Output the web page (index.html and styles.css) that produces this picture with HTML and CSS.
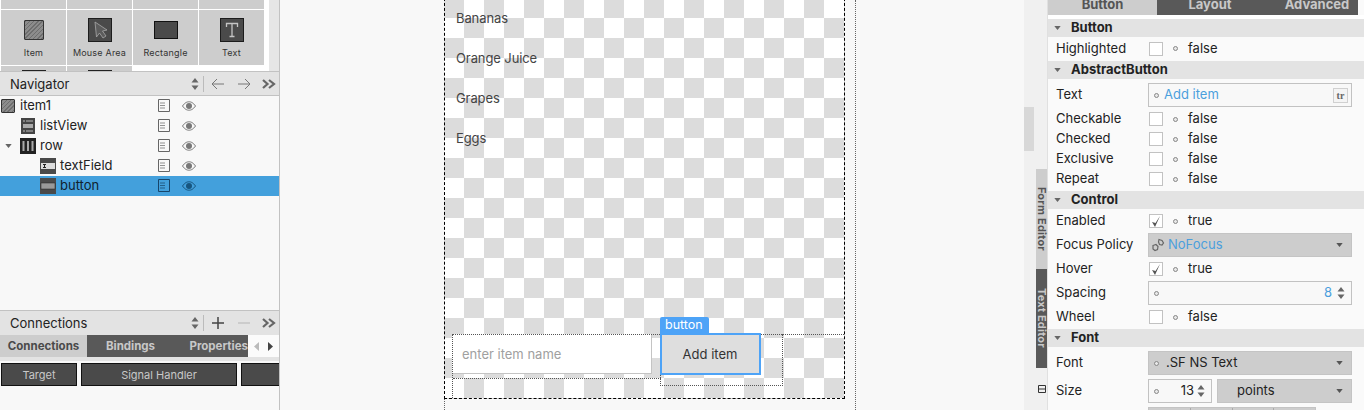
FILE: index.html
```html
<!DOCTYPE html>
<html lang="en">
<head>
    <meta charset="UTF-8">
    <title>Qt Quick Designer</title>
    <link rel="stylesheet" href="styles.css">
</head>
<body>
    <svg class="defs">
        <symbol id="doc" viewBox="0 0 12 13"><path d="M.5.5h11v12H.5z" fill="none" stroke="currentColor"/><path d="M2 4h5M2 6.500h5M2 9h5" stroke="currentColor" opacity=".7"/></symbol>
        <symbol id="eye" viewBox="0 0 14 10"><path d="M.5 5C3 1.500 5 .8 7 .8s4 .7 6.500 4.200C11 8.500 9 9.200 7 9.200S3 8.500.5 5z" fill="none" stroke="currentColor"/><circle cx="7" cy="5" r="3" fill="currentColor"/></symbol>
        <symbol id="updown" viewBox="0 0 8 12"><path d="M4 0l3.500 4.500h-7zM4 12L.5 7.500h7z" fill="currentColor"/></symbol>
        <symbol id="caret" viewBox="0 0 8 5"><path d="M0 0h8L4 5z" fill="currentColor"/></symbol>
        <symbol id="more" viewBox="0 0 14 10"><path d="M1 1l4.500 4L1 9M7 1l5 4-5 4" fill="none" stroke="currentColor" stroke-width="2.200"/></symbol>
        <symbol id="check" viewBox="0 0 12 13"><path d="M2 7l3 5 5-11-4.500 7z" fill="currentColor"/></symbol>
    </svg>

    <div class="app">
        <!-- left side: library, navigator, connections -->
        <aside class="left">
            <div class="library">
                <div class="lib-grid">
                    <div class="cell cell-cut"></div>
                    <div class="cell cell-cut"></div>
                    <div class="cell cell-cut"></div>
                    <div class="cell cell-cut"></div>

                    <div class="cell">
                        <div class="lib-icon"><span class="ico-item"></span></div>
                        <span>Item</span>
                    </div>
                    <div class="cell">
                        <div class="lib-icon">
                            <svg width="24" height="24" viewBox="0 0 24 24"><rect x=".5" y=".5" width="23" height="23" fill="#4a4a4a" stroke="#1c1c1c"/><path d="M7 4l1.500 15 3-4 3.500 5 3-2-3.500-5 4.500-1z" fill="#5c5c5c" stroke="#a8a8a8" stroke-width=".8"/></svg>
                        </div>
                        <span>Mouse Area</span>
                    </div>
                    <div class="cell">
                        <div class="lib-icon">
                            <svg width="24" height="18" viewBox="0 0 24 18"><rect x=".5" y=".5" width="23" height="17" fill="#4a4a4a" stroke="#111"/></svg>
                        </div>
                        <span>Rectangle</span>
                    </div>
                    <div class="cell">
                        <div class="lib-icon">
                            <svg width="24" height="24" viewBox="0 0 24 24"><rect x=".5" y=".5" width="23" height="23" fill="#4a4a4a" stroke="#1c1c1c"/><path d="M6.500 9V5.500h11V9M12 5.500v13M9.500 18.500h5" fill="none" stroke="#c4c4c4" stroke-width="1.300"/></svg>
                        </div>
                        <span>Text</span>
                    </div>

                    <div class="cell cell-peek"><i></i></div>
                    <div class="cell cell-peek"><i></i></div>
                </div>
                <div class="lib-scroll"></div>
            </div>

            <div class="pane-head">
                <span class="pane-title">Navigator</span>
                <svg class="ud" width="8" height="12"><use href="#updown"/></svg>
                <span class="pane-sep"></span>
                <svg class="tool" width="14" height="12" viewBox="0 0 14 12"><path d="M13 6H1M6 1L1 6l5 5" fill="none" stroke="#777"/></svg>
                <svg class="tool" width="14" height="12" viewBox="0 0 14 12"><path d="M1 6h12M8 1l5 5-5 5" fill="none" stroke="#777"/></svg>
                <svg class="more" width="14" height="10"><use href="#more"/></svg>
            </div>

            <div class="tree">
                <div class="node lvl0">
                    <span class="ico-item ico-small"></span>
                    <span class="node-name">item1</span>
                    <svg class="doc" width="12" height="13"><use href="#doc"/></svg>
                    <svg class="eye" width="14" height="10"><use href="#eye"/></svg>
                </div>
                <div class="node lvl1">
                    <svg width="14" height="16" viewBox="0 0 14 16"><rect width="14" height="16" fill="#444"/><path d="M2 3h2M5 3h7M2 13h2M5 13h7" stroke="#bbb"/><rect x="2" y="6" width="10" height="4" fill="#aaa"/></svg>
                    <span class="node-name">listView</span>
                    <svg class="doc" width="12" height="13"><use href="#doc"/></svg>
                    <svg class="eye" width="14" height="10"><use href="#eye"/></svg>
                </div>
                <div class="node lvl1">
                    <svg class="twisty" width="7" height="4"><use href="#caret"/></svg>
                    <svg class="ico-row" width="16" height="16" viewBox="0 0 16 16"><rect width="16" height="16" fill="#222"/><path d="M3.500 3v10M8 3v10M12.500 3v10" stroke="#aaa" stroke-width="2"/></svg>
                    <span class="node-name">row</span>
                    <svg class="doc" width="12" height="13"><use href="#doc"/></svg>
                    <svg class="eye" width="14" height="10"><use href="#eye"/></svg>
                </div>
                <div class="node lvl2">
                    <svg width="16" height="16" viewBox="0 0 16 16"><rect width="16" height="16" fill="#4a4a4a"/><rect x="1" y="5" width="14" height="6" fill="#ddd"/><path d="M3 6.500h3M3 9.500h3M4.500 6.500v3" stroke="#222"/></svg>
                    <span class="node-name">textField</span>
                    <svg class="doc" width="12" height="13"><use href="#doc"/></svg>
                    <svg class="eye" width="14" height="10"><use href="#eye"/></svg>
                </div>
                <div class="node lvl2 selected">
                    <svg width="16" height="16" viewBox="0 0 16 16"><rect width="16" height="16" fill="#4a4a4a"/><rect x="1" y="5" width="14" height="6" fill="#999" stroke="#222" stroke-width=".5"/></svg>
                    <span class="node-name">button</span>
                    <svg class="doc" width="12" height="13"><use href="#doc"/></svg>
                    <svg class="eye" width="14" height="10"><use href="#eye"/></svg>
                </div>
            </div>

            <div class="pane-head pane-head-conn">
                <span class="pane-title">Connections</span>
                <svg class="ud" width="8" height="12"><use href="#updown"/></svg>
                <span class="pane-sep"></span>
                <svg class="tool" width="14" height="14" viewBox="0 0 14 14"><path d="M7 1v12M1 7h12" stroke="#444" stroke-width="1.500"/></svg>
                <svg class="tool" width="14" height="14" viewBox="0 0 14 14"><path d="M1 7h12" stroke="#c4c4c4" stroke-width="1.500"/></svg>
                <svg class="more" width="14" height="10"><use href="#more"/></svg>
            </div>
            <div class="conn-tabs">
                <span class="conn-tab on">Connections</span>
                <div class="conn-rest">
                    <span class="conn-tab">Bindings</span>
                    <span class="conn-tab conn-tab-props">Properties</span>
                </div>
                <div class="conn-arrows">
                    <svg width="5" height="9" viewBox="0 0 5 9"><path d="M5 0v9L0 4.500z" fill="#bbb"/></svg>
                    <svg width="5" height="9" viewBox="0 0 5 9"><path d="M0 0v9l5-4.500z" fill="#444"/></svg>
                </div>
            </div>
            <div class="conn-cols">
                <span class="col-btn col-target">Target</span>
                <span class="col-btn col-signal">Signal Handler</span>
                <span class="col-btn col-rest"></span>
            </div>
            <div class="conn-empty"></div>
        </aside>

        <!-- form canvas -->
        <main class="center">
            <div class="guide guide-right"></div>
            <div class="guide guide-below"></div>
            <div class="canvas">
                <div class="list-item item-0">Bananas</div>
                <div class="list-item item-1">Orange Juice</div>
                <div class="list-item item-2">Grapes</div>
                <div class="list-item item-3">Eggs</div>
                <div class="text-field">enter item name</div>
                <div class="row-bounds"></div>
                <div class="row-line"></div>
                <div class="field-bounds"></div>
                <div class="sel-label">button</div>
                <div class="sel-button">Add item</div>
            </div>
        </main>

        <div class="scroll-strip"><div class="scroll-thumb"></div></div>

        <div class="side-tabs">
            <div class="side-tab side-form"><span>Form Editor</span></div>
            <div class="side-tab side-text"><span>Text Editor</span></div>
            <svg class="side-split" width="8" height="8" viewBox="0 0 8 8"><path d="M.5.5h7v7h-7zM.5 4h7" fill="none" stroke="#333"/></svg>
        </div>

        <!-- properties -->
        <aside class="props">
            <div class="prop-tabs">
                <span class="prop-tab on">Button</span>
                <div class="prop-tab-rest">
                    <span class="prop-tab">Layout</span>
                    <span class="prop-tab">Advanced</span>
                </div>
            </div>

            <div class="section"><svg width="7" height="4"><use href="#caret"/></svg><b>Button</b></div>
            <div class="body body-button">
                <div class="row r23"><label>Highlighted</label><i class="box"></i><i class="dot"></i><span>false</span></div>
            </div>

            <div class="section"><svg width="7" height="4"><use href="#caret"/></svg><b>AbstractButton</b></div>
            <div class="body body-abstract">
                <div class="row r24 mb2">
                    <label>Text</label>
                    <div class="field">
                        <i class="dot dot-f"></i><span class="blue">Add item</span>
                        <span class="tr">tr</span>
                    </div>
                </div>
                <div class="row"><label>Checkable</label><i class="box"></i><i class="dot"></i><span>false</span></div>
                <div class="row"><label>Checked</label><i class="box"></i><i class="dot"></i><span>false</span></div>
                <div class="row"><label>Exclusive</label><i class="box"></i><i class="dot"></i><span>false</span></div>
                <div class="row"><label>Repeat</label><i class="box"></i><i class="dot"></i><span>false</span></div>
            </div>

            <div class="section"><svg width="7" height="4"><use href="#caret"/></svg><b>Control</b></div>
            <div class="body">
                <div class="row r24"><label>Enabled</label><i class="box"><svg width="12" height="13"><use href="#check"/></svg></i><i class="dot"></i><span>true</span></div>
                <div class="row r24">
                    <label>Focus Policy</label>
                    <div class="field combo">
                        <svg class="link" width="14" height="14" viewBox="0 0 14 14"><path d="M8 1.500l3 1 1.500 2.500-1.500 2-2.500-.5-1-2.500zM2 7.500l3-1 2 2-.5 3-2.500 1-2-1.500z" fill="none" stroke="#666" stroke-width="1.200"/></svg>
                        <span class="blue">NoFocus</span>
                        <svg class="caret" width="7" height="4"><use href="#caret"/></svg>
                    </div>
                </div>
                <div class="row r24"><label>Hover</label><i class="box"><svg width="12" height="13"><use href="#check"/></svg></i><i class="dot"></i><span>true</span></div>
                <div class="row r24">
                    <label>Spacing</label>
                    <div class="field">
                        <i class="dot dot-f"></i><span class="blue push">8</span>
                        <svg class="ud-f" width="8" height="12"><use href="#updown"/></svg>
                    </div>
                </div>
                <div class="row r24"><label>Wheel</label><i class="box"></i><i class="dot"></i><span>false</span></div>
            </div>

            <div class="section"><svg width="7" height="4"><use href="#caret"/></svg><b>Font</b></div>
            <div class="body body-font">
                <div class="row r24">
                    <label>Font</label>
                    <div class="field combo">
                        <i class="dot dot-f dot-font"></i><span class="font-name">.SF NS Text</span>
                        <svg class="caret" width="7" height="4"><use href="#caret"/></svg>
                    </div>
                </div>
                <div class="row r24">
                    <label>Size</label>
                    <div class="field field-size">
                        <i class="dot dot-f"></i><span class="push">13</span>
                        <svg class="ud-f" width="8" height="12"><use href="#updown"/></svg>
                    </div>
                    <div class="field combo combo-unit">
                        <span>points</span>
                        <svg class="caret" width="7" height="4"><use href="#caret"/></svg>
                    </div>
                </div>
                <div class="row r24">
                    <label></label>
                    <div class="style-btns"><i></i><i></i><i></i><i></i></div>
                </div>
            </div>
        </aside>
    </div>
</body>
</html>
```
FILE: styles.css
```css
* {
    box-sizing: border-box;
}

body {
    margin: 0;
    font-family: Inter, "Liberation Sans", sans-serif;
    font-size: 13px;
    color: #222;
    background: #f8f8f8;
}

.defs {
    position: absolute;
    width: 0;
    height: 0;
}

.app {
    display: flex;
    width: 1364px;
    height: 410px;
    overflow: hidden;
}

/* Left side */
.left {
    width: 280px;
    height: 410px;
    flex: none;
    display: flex;
    flex-direction: column;
    border-right: 1px solid #c2c2c2;
    background: #f8f8f8;
}

.library {
    height: 71px;
    flex: none;
    display: flex;
    overflow: hidden;
    background: #f8f8f8;
}

.lib-grid {
    width: 269px;
    display: grid;
    grid-template-columns: repeat(4, 65px);
    grid-template-rows: 9px 55px 5px;
    gap: 1px;
    padding-left: 1px;
    background: #fff;
    align-content: start;
}

.lib-scroll {
    width: 10px;
    background: #e6e6e6;
}

.cell {
    background: #cdcdcd;
    display: flex;
    flex-direction: column;
    align-items: center;
    font-size: 9px;
    letter-spacing: 0.2px;
    line-height: 13px;
    color: #333;
}

.lib-icon {
    height: 36px;
    padding-top: 4px;
    display: flex;
    align-items: center;
    justify-content: center;
}

.cell i {
    display: block;
    width: 24px;
    height: 1px;
    margin-top: 4px;
    background: #222;
}

.cell-peek {
    height: 5px;
}

.ico-item {
    display: block;
    width: 20px;
    height: 20px;
    border: 1px solid #333;
    border-radius: 1px;
    background: repeating-linear-gradient(135deg, #6e6e6e 0 1px, #8c8c8c 1px 3px);
}

.ico-small {
    width: 14px;
    height: 14px;
    margin-left: 1px;
}

.pane-head {
    height: 25px;
    flex: none;
    display: flex;
    align-items: center;
    padding-left: 10px;
    background: #e3e3e3;
    border-top: 1px solid #c2c2c2;
    border-bottom: 1px solid #c2c2c2;
}

.pane-title {
    width: 181px;
    color: #222;
}

.ud {
    width: 8px;
    color: #666;
}

.pane-sep {
    width: 1px;
    height: 16px;
    margin: 0 7px 0 4px;
    background: #bbb;
}

.tool {
    margin-right: 12px;
}

.more {
    margin-left: -1px;
    color: #666;
}

.tree {
    flex: 1;
}

.node {
    position: relative;
    height: 20px;
    display: flex;
    align-items: center;
    gap: 5px;
    color: #222;
}

.node.lvl1 {
    padding-left: 21px;
}

.node.lvl2 {
    padding-left: 40px;
    gap: 4px;
}

.node.selected {
    background: #43a0dc;
}

.node-name {
    padding-bottom: 2px;
    color: #222;
}

.selected .node-name {
    color: #10222e;
}

.twisty {
    position: absolute;
    left: 5px;
    top: 8px;
    color: #666;
}

.ico-row {
    margin: 0 -1px 0 -1px;
}

.doc {
    position: absolute;
    left: 158px;
    top: 3px;
    color: #666;
}

.eye {
    position: absolute;
    left: 182px;
    top: 5px;
    color: #777;
}

.selected .doc {
    color: #17456a;
}

.selected .eye {
    color: #17557f;
}

.pane-head-conn {
    border-bottom: 0;
}

.conn-tabs {
    height: 22px;
    flex: none;
    display: flex;
    font-size: 11.500px;
    font-weight: 700;
}

.conn-tab {
    display: flex;
    flex: none;
    align-items: center;
    justify-content: center;
    width: 87px;
    background: #cdcdcd;
    color: #4a4a4a;
    white-space: nowrap;
}

.conn-rest {
    width: 161px;
    flex: none;
    display: flex;
    background: #595959;
    overflow: hidden;
}

.conn-rest .conn-tab {
    background: transparent;
    color: #c8c8c8;
}

.conn-rest .conn-tab-props {
    width: 74px;
    justify-content: flex-end;
}

.conn-arrows {
    flex: 1;
    display: flex;
    align-items: center;
    justify-content: space-around;
    padding: 0 2px;
    background: #fbfbfb;
}

.conn-cols {
    height: 29px;
    flex: none;
    display: flex;
    gap: 4px;
    padding: 6px 0 0 1px;
    background: linear-gradient(#e3e3e3 4px, #f8f8f8 4px);
    overflow: hidden;
}

.col-btn {
    height: 23px;
    display: flex;
    align-items: center;
    justify-content: center;
    background: #4a4a4a;
    border: 1px solid #111;
    color: #c8c8c8;
    font-size: 11px;
}

.col-target {
    width: 76px;
}

.col-signal {
    width: 156px;
}

.col-rest {
    flex: 1;
    border-right: 0;
}

.conn-empty {
    height: 24px;
    flex: none;
}

/* Form canvas, items sit at free positions */
.center {
    position: relative;
    width: 744px;
    flex: none;
}

.guide {
    position: absolute;
    border-left: 1px dotted #666;
}

.guide-right {
    left: 575px;
    top: 0;
    height: 410px;
}

.guide-below {
    left: 164px;
    top: 398px;
    height: 12px;
}

.canvas {
    position: absolute;
    left: 164px;
    top: -2px;
    width: 401px;
    height: 401px;
    border: 1px dashed #000;
    background-color: #fff;
    background-image: conic-gradient(#fff 25%, #dcdcdc 0 50%, #fff 0 75%, #dcdcdc 0);
    background-size: 40px 40px;
    background-position: -1px -1px;
}

.list-item {
    position: absolute;
    left: 11px;
    line-height: 18px;
    letter-spacing: -0.1px;
    color: #444;
}

.item-0 { top: 10px; }
.item-1 { top: 50px; }
.item-2 { top: 90px; }
.item-3 { top: 130px; }

.row-line {
    position: absolute;
    left: 7px;
    right: 0;
    top: 335px;
    border-top: 1px dotted #555;
}

.row-bounds {
    position: absolute;
    left: 215px;
    top: 335px;
    width: 123px;
    height: 52px;
    border-right: 1px dotted #555;
    border-bottom: 1px dotted #555;
    border-left: 1px dotted #555;
}

.field-bounds {
    position: absolute;
    left: 7px;
    top: 335px;
    width: 209px;
    bottom: 0;
    border-left: 1px dotted #555;
}

.field-bounds::after {
    content: "";
    position: absolute;
    left: 0;
    right: 0;
    top: 44px;
    border-top: 1px dotted #555;
}

.text-field {
    position: absolute;
    left: 7px;
    top: 335px;
    width: 200px;
    height: 40px;
    padding-left: 10px;
    line-height: 40px;
    background: #fff;
    border-right: 1px solid #c4c4c4;
    border-bottom: 1px solid #c4c4c4;
    color: #a0a0a0;
}

.sel-label {
    position: absolute;
    left: 215px;
    top: 318px;
    width: 49px;
    height: 16px;
    padding-left: 5px;
    line-height: 15px;
    font-size: 12.500px;
    background: #4da3f7;
    color: #fff;
    border-radius: 2px 2px 0 0;
}

.sel-button {
    position: absolute;
    left: 215px;
    top: 334px;
    width: 101px;
    height: 42px;
    padding-right: 1px;
    line-height: 38px;
    text-align: center;
    background: #dedede;
    border: 2px solid #4da3f7;
    color: #333;
}

/* Scrollbar and side tabs */
.scroll-strip {
    width: 11px;
    flex: none;
    padding-top: 107px;
    background: #f0f0f0;
}

.scroll-thumb {
    width: 10px;
    height: 44px;
    background: #d8d8d8;
}

.side-tabs {
    width: 13px;
    flex: none;
    padding: 169px 0 0 1px;
    background: #f0f0f0;
    border-right: 1px solid #e0e0e0;
}

.side-tab {
    width: 11px;
    height: 100px;
    display: flex;
    align-items: center;
    padding-top: 18px;
    writing-mode: vertical-rl;
    font-size: 11px;
    letter-spacing: 0.2px;
    font-weight: 700;
    line-height: 11px;
}

.side-form {
    background: #cdcdcd;
    color: #555;
}

.side-text {
    height: 99px;
    background: #595959;
    color: #c8c8c8;
    padding-top: 19px;
}

.side-split {
    display: block;
    margin: 17px 0 0 2px;
}

/* Properties */
.props {
    flex: 1;
    width: 316px;
    background: #fafafa;
}

.prop-tabs {
    height: 19px;
    display: flex;
    padding-bottom: 4px;
    padding-right: 6px;
    background: linear-gradient(#fff, #fff) 0 100% / 100% 4px no-repeat;
    font-weight: 700;
    overflow: hidden;
}

.prop-tab {
    display: flex;
    flex: none;
    align-items: flex-end;
    justify-content: center;
    width: 109px;
    height: 15px;
    line-height: 13px;
    background: #cdcdcd;
    color: #555;
    padding-bottom: 4px;
}

.prop-tab-rest {
    flex: 1;
    display: flex;
    overflow: hidden;
    background: #595959;
}

.prop-tab-rest .prop-tab {
    background: transparent;
    color: #c8c8c8;
}

.prop-tab-rest .prop-tab:first-child {
    width: 106px;
}

.prop-tab-rest .prop-tab:last-child {
    width: 108px;
}

.section {
    height: 18px;
    display: flex;
    align-items: center;
    padding-left: 6px;
    background: #e3e3e3;
    color: #666;
}

.section b {
    margin-left: 10px;
    padding-bottom: 2px;
    color: #222;
}

.body-button {
    padding-bottom: 1px;
}

.body-abstract {
    padding: 4px 0 2px;
}

.body-font {
    padding-top: 4px;
    display: flex;
    flex-direction: column;
    gap: 4px;
}

.row {
    height: 20px;
    display: flex;
    align-items: center;
    padding-left: 8px;
}

.r23 {
    height: 23px;
}

.r24 {
    height: 24px;
}

.mb2 {
    margin-bottom: 2px;
}

.row label {
    width: 92px;
    flex: none;
    padding-bottom: 2px;
    color: #222;
}

.row > span,
.field > span {
    padding-bottom: 2px;
}

.box {
    width: 14px;
    height: 14px;
    flex: none;
    margin-left: 1px;
    display: flex;
    align-items: center;
    justify-content: center;
    background: #fff;
    border: 1px solid #c2c2c2;
    color: #555;
}

.dot {
    width: 5px;
    height: 5px;
    flex: none;
    margin: 0 10px 0 10px;
    border: 1px solid #888;
    border-radius: 50%;
    background: #e8e8e8;
}

.dot-f {
    margin: 0 5px 0 5px;
}

.dot-font {
    margin-right: 7px;
}

.field {
    width: 204px;
    height: 24px;
    display: flex;
    align-items: center;
    position: relative;
    border: 1px solid #c2c2c2;
    background: #f8f8f8;
}

.blue {
    color: #4b9fdd;
}

.field > .tr {
    position: absolute;
    right: 3px;
    top: 4px;
    width: 15px;
    height: 15px;
    padding: 0;
    border: 1px solid #d0d0d0;
    background: #f4f4f4;
    font-size: 10px;
    font-weight: 700;
    font-family: "Liberation Serif", serif;
    line-height: 13px;
    text-align: center;
    color: #666;
}

.combo {
    background: #cdcdcd;
    border-color: #c4c4c4;
}

.combo .caret {
    position: absolute;
    right: 8px;
    top: 9px;
    color: #555;
}

.link {
    margin: 0 3px 0 2px;
}

.push {
    margin-left: auto;
    margin-right: 19px;
}

.ud-f {
    position: absolute;
    right: 6px;
    top: 5px;
    color: #666;
}

.field-size {
    width: 64px;
    flex: none;
}

.field-size .push {
    margin-right: 17px;
}

.combo-unit {
    width: 135px;
    margin-left: 5px;
    padding-left: 19px;
}

.style-btns {
    display: flex;
    gap: 1px;
    width: 168px;
    height: 24px;
    border: 1px solid #c4c4c4;
    background: #aaa;
}

.style-btns i {
    flex: 1;
    background: #cdcdcd;
}
```
